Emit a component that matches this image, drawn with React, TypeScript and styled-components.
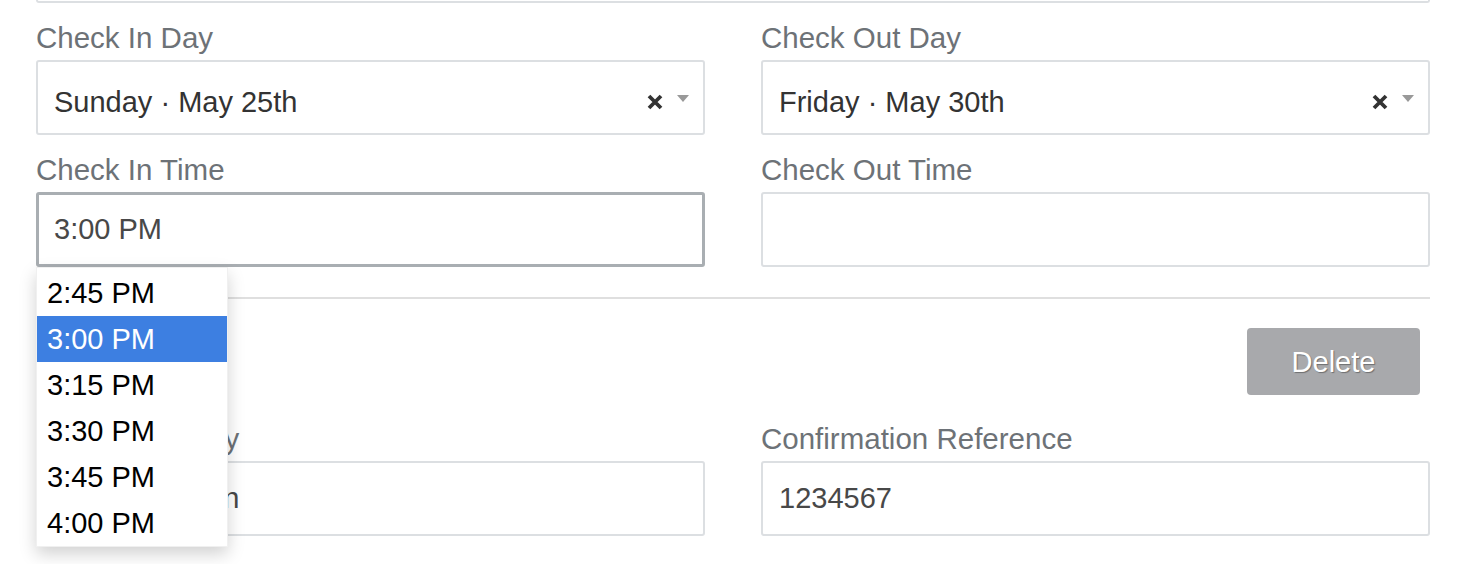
import React from "react";
import styled, { createGlobalStyle } from "styled-components";

const GlobalStyle = createGlobalStyle`
  body {
    margin: 0;
    background: #fff;
    font-family: "Liberation Sans", Arial, sans-serif;
  }
`;

const times = ["2:45 PM", "3:00 PM", "3:15 PM", "3:30 PM", "3:45 PM", "4:00 PM"];

function ClearIcon() {
  return (
    <svg width="16" height="16" viewBox="0 0 16 16">
      <path d="M2 2 L14 14 M14 2 L2 14" stroke="#333" strokeWidth="3.8" strokeLinecap="butt" />
    </svg>
  );
}

function App() {
  return (
    <>
      <GlobalStyle />
      <Page>
        <PrevField />
        <Row>
          <Field>
            <Label>Check In Day</Label>
            <Box $select>
              <Value>Sunday · May 25th</Value>
              <ClearIcon />
              <Caret />
            </Box>
          </Field>
          <Field>
            <Label>Check Out Day</Label>
            <Box $select>
              <Value>Friday · May 30th</Value>
              <ClearIcon />
              <Caret />
            </Box>
          </Field>
        </Row>
        <Row>
          <Field>
            <Label>Check In Time</Label>
            <Box $focused>
              <Value $muted>3:00 PM</Value>
            </Box>
            <TimeList>
              {times.map((t) => (
                <TimeItem key={t} $selected={t === "3:00 PM"}>
                  {t}
                </TimeItem>
              ))}
            </TimeList>
          </Field>
          <Field>
            <Label>Check Out Time</Label>
            <Box />
          </Field>
        </Row>
        <Divider />
        <Actions>
          <DeleteButton>Delete</DeleteButton>
        </Actions>
        <Row>
          <Field $top={26}>
            <Label>Hotel Company</Label>
            <Box>
              <Value $muted>Residence Inn</Value>
            </Box>
          </Field>
          <Field $top={26}>
            <Label>Confirmation Reference</Label>
            <Box>
              <Value $muted>1234567</Value>
            </Box>
          </Field>
        </Row>
      </Page>
    </>
  );
}

const Page = styled.div`
  min-height: 564px;
  box-sizing: border-box;
  padding: 0 32px 0 36px;
`;

const PrevField = styled.div`
  height: 1px;
  border: 2px solid #dcdfe2;
  border-top: none;
  border-radius: 0 0 3px 3px;
`;

const Row = styled.div`
  display: grid;
  grid-template-columns: 1fr 1fr;
  column-gap: 56px;
`;

const Field = styled.div<{ $top?: number }>`
  position: relative;
  margin-top: ${(p) => p.$top ?? 17}px;
`;

const Label = styled.div`
  font-size: 29.5px;
  line-height: 36px;
  color: #6d7277;
  margin-bottom: 4px;
`;

const Box = styled.div<{ $select?: boolean; $focused?: boolean }>`
  box-sizing: border-box;
  height: 75px;
  display: flex;
  align-items: center;
  gap: 14px;
  padding: ${(p) => (p.$select ? "9px 14px 0 16px" : "0 14px 0 16px")};
  border: 2px solid ${(p) => (p.$focused ? "#a9aeb2" : "#dcdfe2")};
  border-width: ${(p) => (p.$focused ? "3px" : "2px")};
  padding-left: ${(p) => (p.$focused ? "15px" : "16px")};
  border-radius: 3px;
  background: #fff;
`;

const Value = styled.span<{ $muted?: boolean }>`
  flex: 1;
  font-size: 29px;
  color: ${(p) => (p.$muted ? "#484848" : "#333")};
  white-space: nowrap;
`;

const Caret = styled.span`
  width: 0;
  height: 0;
  border-style: solid;
  border-width: 7px 6.5px 0;
  border-color: #999 transparent transparent;
  margin-top: -8px;
`;

const TimeList = styled.ul`
  position: absolute;
  top: 100%;
  left: 0;
  z-index: 10;
  width: 192px;
  box-sizing: border-box;
  margin: 0;
  padding: 2px 0 0;
  list-style: none;
  background: #fff;
  border: 1px solid #f0f0f0;
  box-shadow: 0 7px 16px rgba(0, 0, 0, 0.18);
`;

const TimeItem = styled.li<{ $selected?: boolean }>`
  height: 46px;
  line-height: 46px;
  padding-left: 10px;
  font-size: 29px;
  color: ${(p) => (p.$selected ? "#fff" : "#000")};
  background: ${(p) => (p.$selected ? "#3d7fe1" : "transparent")};
`;

const Divider = styled.div`
  margin-top: 30px;
  border-top: 2px solid #dfdfdf;
`;

const Actions = styled.div`
  display: flex;
  justify-content: flex-end;
  padding-right: 10px;
  margin-top: 29px;
`;

const DeleteButton = styled.button`
  width: 173px;
  height: 67px;
  border: none;
  border-radius: 4px;
  background: #a8a9ac;
  color: #fff;
  font-family: "Liberation Sans", Arial, sans-serif;
  font-size: 29px;
  padding-top: 3px;
  text-shadow: 1px 1px 1px rgba(0, 0, 0, 0.35);
  cursor: pointer;
`;

export default App;
